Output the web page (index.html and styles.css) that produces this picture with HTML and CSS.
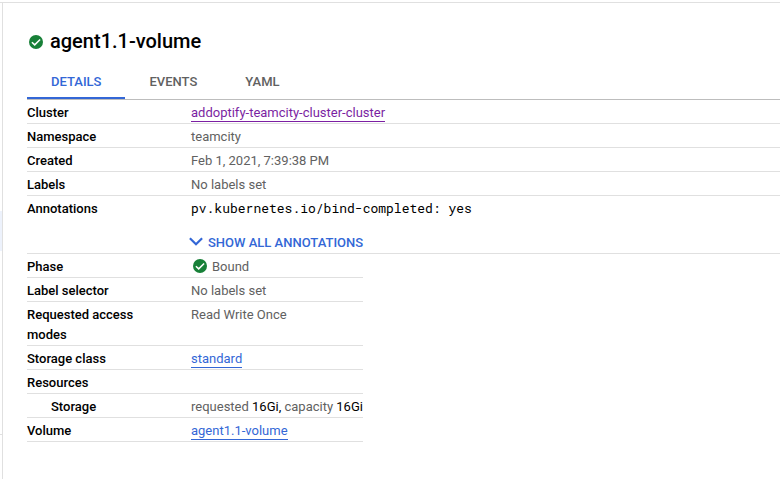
FILE: index.html
```html
<!DOCTYPE html>
<html lang="en">
<head>
<meta charset="utf-8">
<title>agent1.1-volume</title>
<link rel="stylesheet" href="styles.css">
</head>
<body>
<aside class="rail"><div class="selected"></div><div class="divider"></div></aside>
<main class="panel">
  <header class="title">
    <svg class="status" viewBox="0 0 14 14"><circle cx="7" cy="7" r="7"/><path d="M2.900 7.200 5.700 9.900l5.400-5.400"/></svg>
    <h1>agent1.1-volume</h1>
  </header>
  <nav class="tabs">
    <a class="tab active">DETAILS</a>
    <a class="tab">EVENTS</a>
    <a class="tab">YAML</a>
  </nav>
  <dl class="rows">
    <div class="row"><dt>Cluster</dt><dd><a class="link visited">addoptify-teamcity-cluster-cluster</a></dd></div>
    <div class="row"><dt>Namespace</dt><dd>teamcity</dd></div>
    <div class="row"><dt>Created</dt><dd>Feb 1, 2021, 7:39:38 PM</dd></div>
    <div class="row"><dt>Labels</dt><dd>No labels set</dd></div>
    <div class="row annotations"><dt>Annotations</dt><dd><code>pv.kubernetes.io/bind-completed: yes</code>
      <button class="more"><svg viewBox="0 0 14 9"><path d="M.9 1.200 7 7.200l6.100-6"/></svg>SHOW ALL ANNOTATIONS</button></dd></div>
  </dl>
  <dl class="rows narrow">
    <div class="row"><dt>Phase</dt><dd class="phase"><svg class="status" viewBox="0 0 14 14"><circle cx="7" cy="7" r="7"/><path d="M2.900 7.200 5.700 9.900l5.400-5.400"/></svg>Bound</dd></div>
    <div class="row"><dt>Label selector</dt><dd>No labels set</dd></div>
    <div class="row"><dt>Requested access modes</dt><dd>Read Write Once</dd></div>
    <div class="row"><dt>Storage class</dt><dd><a class="link">standard</a></dd></div>
    <div class="row"><dt>Resources</dt><dd></dd></div>
    <div class="row"><dt class="nested">Storage</dt><dd>requested <b>16Gi,</b> capacity <b>16Gi</b></dd></div>
    <div class="row"><dt>Volume</dt><dd><a class="link">agent1.1-volume</a></dd></div>
  </dl>
</main>
</body>
</html>
```
FILE: styles.css
```css
* { box-sizing: border-box; }
body { display: flex; margin: 0; height: 479px; padding-top: 2px; background: #fff; font: 13px/20px Roboto, sans-serif; color: #616161; overflow: hidden; }
.rail { width: 2px; flex: none; padding-top: 208px; border-top: 1px solid #e0e0e0; }
.selected { height: 40px; background: #edf2fc; }
.divider { height: 1px; margin-top: 183px; background: #e0e0e0; }
.panel { flex: 1; min-width: 0; border-top: 1px solid #e0e0e0; border-left: 1px solid #e0e0e0; padding: 24px 0 0 24px; }
.title { display: flex; align-items: center; height: 28px; gap: 7px; padding-left: 2px; }
.title .status { margin-top: 2px; }
.status { width: 14px; height: 14px; flex: none; }
.status circle { fill: #188038; }
.status path { fill: none; stroke: #fff; stroke-width: 1.5; }
h1 { margin: 0; font-size: 20px; font-weight: 500; line-height: 28px; color: #000; }
.tabs { display: flex; height: 45px; border-bottom: 1px solid #bdbdbd; }
.tab { height: 44px; padding: 17px 24px 0; font-weight: 500; }
.tab.active { color: #3367d6; border-bottom: 2px solid #3367d6; }
.rows { margin: 0; }
.narrow { width: 336px; }
.row { display: grid; grid-template-columns: 164px 1fr; padding: 3px 0 0; border-bottom: 1px solid #e0e0e0; }
dt { color: #000; font-weight: 500; padding-right: 40px; }
dt.nested { padding-left: 24px; }
dd { margin: 0; min-width: 0; white-space: nowrap; }
b { font-weight: 400; color: #000; }
.link { color: #3367d6; border-bottom: 1px solid; padding-bottom: 1px; }
.visited { color: #7b1fa2; }
code { display: block; font: 13px/18px "Roboto Mono", "DejaVu Sans Mono", monospace; color: #000; }
.more { display: flex; align-items: center; margin: 16px 0 0 -2px; padding: 0; height: 20px; gap: 5px; border: 0; background: none; color: #3367d6; font: 500 13px/20px Roboto, sans-serif; }
.more svg { width: 14px; height: 9px; margin-top: -3px; }
.more path { fill: none; stroke: currentColor; stroke-width: 2.2; }
.phase { display: flex; align-items: center; gap: 5px; padding-left: 2px; }
.phase .status { margin-top: -2px; }
```
